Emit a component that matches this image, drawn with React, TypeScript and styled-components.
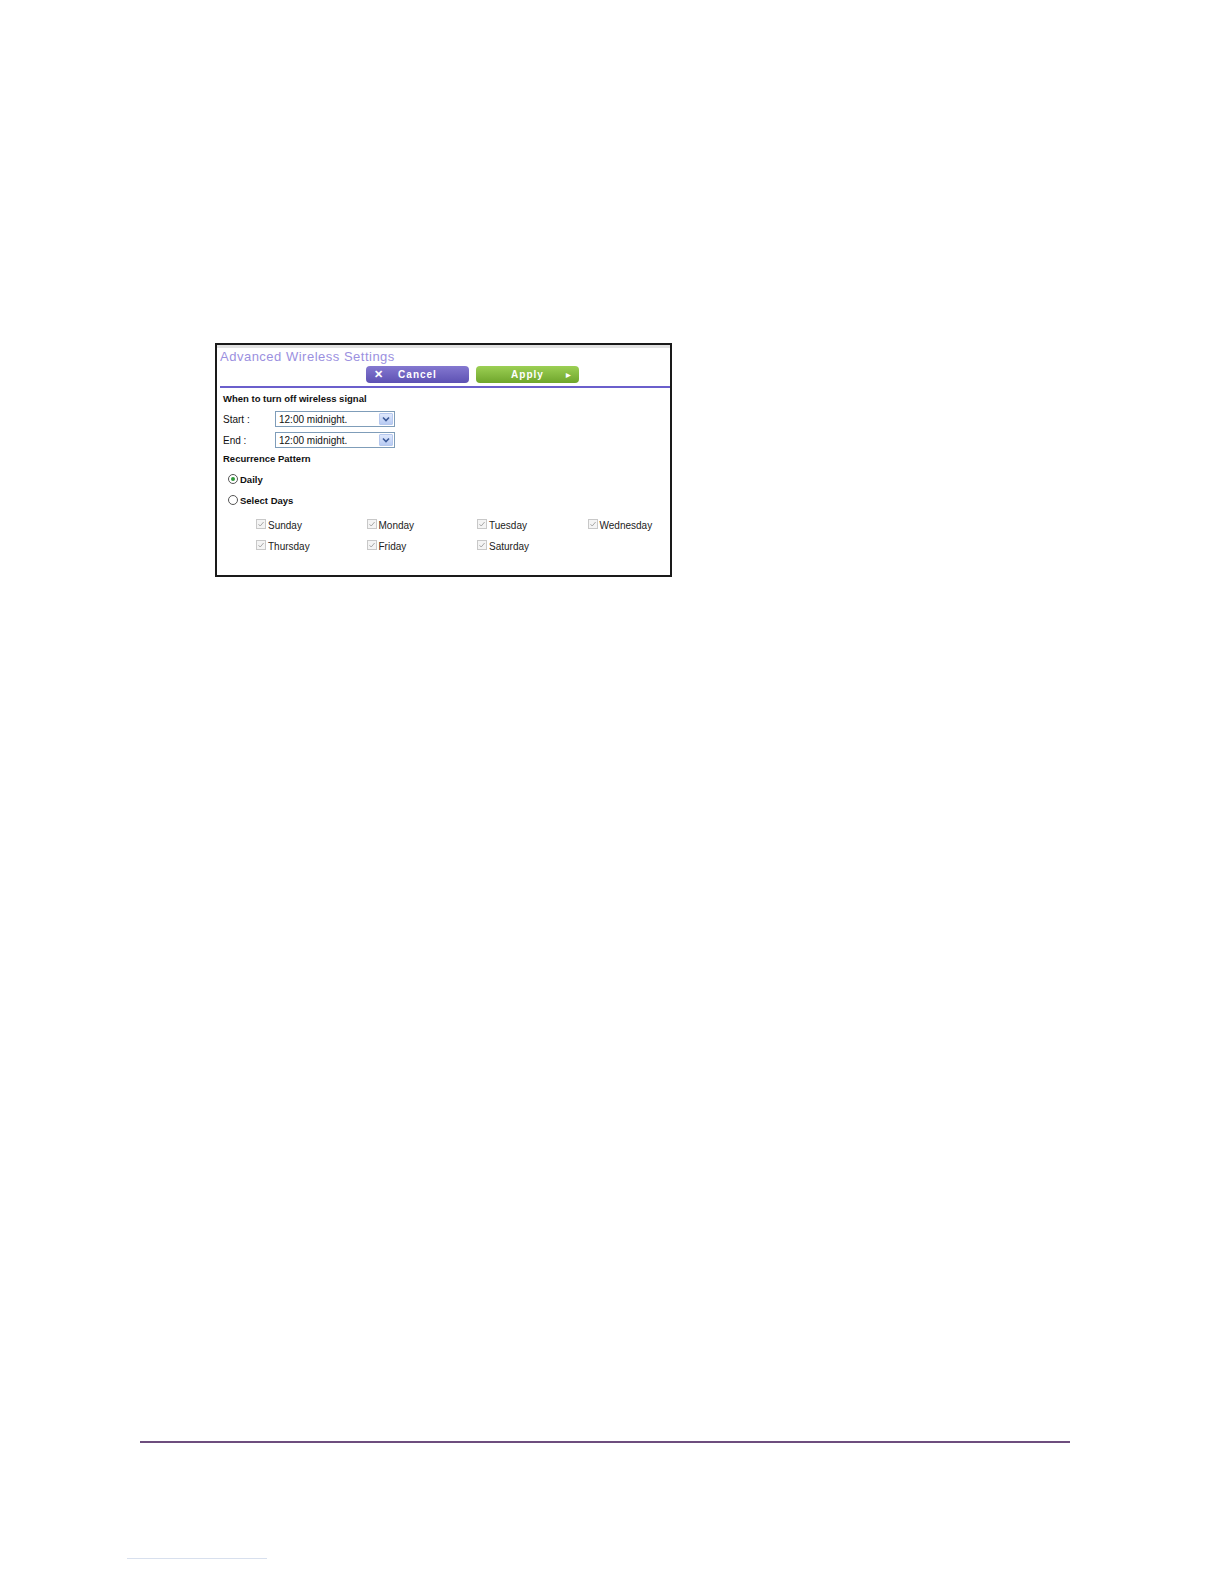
import styled, { createGlobalStyle } from "styled-components";

const GlobalStyle = createGlobalStyle`
  html, body {
    margin: 0;
    padding: 0;
    background: #fff;
  }
  body {
    font-family: "Liberation Sans", Arial, sans-serif;
  }
`;

const Page = styled.div`
  width: 1224px;
  height: 1584px;
  position: relative;
  overflow: hidden;
  background: #fff;
  padding-top: 343px;
  box-sizing: border-box;
`;

const Panel = styled.div`
  margin-left: 215px;
  width: 457px;
  height: 234px;
  box-sizing: border-box;
  border: 2px solid #1a1a1a;
  background: #fff;
  display: flex;
  flex-direction: column;
`;

const Header = styled.div`
  border-top: 3px solid #e2e2e2;
  padding: 2px 0 0 3px;
`;

const Title = styled.div`
  color: #9b90e0;
  font-size: 13px;
  line-height: 14px;
  letter-spacing: 0.5px;
`;

const ButtonRow = styled.div`
  display: flex;
  gap: 7px;
  padding-left: 146px;
  margin-top: 2px;
`;

const Button = styled.div<{ $variant: "cancel" | "apply" }>`
  width: 103px;
  height: 17px;
  border-radius: 4px;
  box-sizing: border-box;
  display: flex;
  align-items: center;
  color: #fff;
  font-weight: 700;
  font-size: 10px;
  letter-spacing: 1px;
  padding: 0 8px;
  background: ${(p) =>
    p.$variant === "cancel"
      ? "linear-gradient(#8478d0, #5d51b3)"
      : "linear-gradient(#9cd054, #6fa52c)"};
`;

const ButtonIcon = styled.span`
  font-size: 11px;
  width: 18px;
`;

const ButtonLabel = styled.span`
  flex: 1;
  text-align: center;
`;

const Spacer = styled.span`
  width: 18px;
`;

const ArrowIcon = styled.span`
  font-size: 6px;
  letter-spacing: 0;
  width: 18px;
  text-align: right;
`;

const Divider = styled.div`
  height: 2px;
  background: #6b5fcc;
  margin-top: 3px;
`;

const Body = styled.div`
  padding: 4px 0 0 6px;
  display: flex;
  flex-direction: column;
  color: #111;
  font-size: 10px;
`;

const SectionLabel = styled.div<{ $gap?: number }>`
  font-weight: 700;
  font-size: 9.5px;
  line-height: 14px;
  margin-top: ${(p) => p.$gap ?? 0}px;
`;

const FieldRow = styled.div`
  display: flex;
  align-items: center;
  height: 16px;
  margin-top: 5px;
`;

const FieldLabel = styled.div`
  width: 52px;
  font-size: 10px;
`;

const Select = styled.div`
  width: 120px;
  height: 16px;
  box-sizing: border-box;
  border: 1px solid #7f9db9;
  display: flex;
  align-items: center;
  justify-content: space-between;
  padding-left: 3px;
  font-size: 10px;
  background: #fff;
`;

const SelectArrow = styled.div`
  width: 14px;
  height: 12px;
  margin-right: 1px;
  border-radius: 1px;
  background: linear-gradient(#dfe8fc, #b8cbf3);
  border: 1px solid #b6c8ee;
  box-sizing: border-box;
  display: flex;
  align-items: center;
  justify-content: center;
`;

const RadioRow = styled.label<{ $gap: number }>`
  display: flex;
  align-items: center;
  height: 14px;
  margin-left: 5px;
  margin-top: ${(p) => p.$gap}px;
  font-weight: 700;
  font-size: 9.5px;
  gap: 2px;
`;

const Radio = styled.span<{ $checked?: boolean }>`
  width: 10px;
  height: 10px;
  border-radius: 50%;
  border: 1px solid #555;
  box-sizing: border-box;
  display: flex;
  align-items: center;
  justify-content: center;
  background: #fff;
  &::after {
    content: "";
    width: 4px;
    height: 4px;
    border-radius: 50%;
    background: ${(p) => (p.$checked ? "#2f9a3a" : "transparent")};
  }
`;

const DaysGrid = styled.div`
  display: grid;
  grid-template-columns: repeat(4, 110.5px);
  row-gap: 8px;
  padding-left: 33px;
  margin-top: 12px;
`;

const Day = styled.div`
  display: flex;
  align-items: center;
  height: 13px;
  gap: 2px;
  font-size: 10px;
  color: #222;
`;

const Check = styled.span`
  width: 10px;
  height: 10px;
  border: 1px solid #c8c8c8;
  box-sizing: border-box;
  background: #f4f4f4;
  display: flex;
  align-items: center;
  justify-content: center;
  margin-top: -3px;
`;

const Footer = styled.div`
  position: absolute;
  left: 140px;
  top: 1441px;
  width: 930px;
  height: 2px;
  background: #6d4d7e;
`;

const FootNote = styled.div`
  position: absolute;
  left: 127px;
  top: 1558px;
  width: 140px;
  height: 1px;
  background: #d8e0ee;
`;

const days = ["Sunday", "Monday", "Tuesday", "Wednesday", "Thursday", "Friday", "Saturday"];

function Chevron() {
  return (
    <svg width="8" height="6" viewBox="0 0 8 6">
      <path d="M1 1.5 L4 4.5 L7 1.5" fill="none" stroke="#3b5998" strokeWidth="1.6" />
    </svg>
  );
}

function Tick() {
  return (
    <svg width="8" height="8" viewBox="0 0 8 8">
      <path d="M1.5 4.2 L3.2 6 L6.6 2" fill="none" stroke="#a9a9a9" strokeWidth="1" />
    </svg>
  );
}

export default function App() {
  return (
    <>
      <GlobalStyle />
      <Page>
        <Panel>
          <Header>
            <Title>Advanced Wireless Settings</Title>
            <ButtonRow>
              <Button $variant="cancel">
                <ButtonIcon>✕</ButtonIcon>
                <ButtonLabel>Cancel</ButtonLabel>
                <Spacer />
              </Button>
              <Button $variant="apply">
                <Spacer />
                <ButtonLabel>Apply</ButtonLabel>
                <ArrowIcon>▶</ArrowIcon>
              </Button>
            </ButtonRow>
            <Divider />
          </Header>
          <Body>
            <SectionLabel>When to turn off wireless signal</SectionLabel>
            <FieldRow>
              <FieldLabel>Start :</FieldLabel>
              <Select>
                12:00 midnight.
                <SelectArrow>
                  <Chevron />
                </SelectArrow>
              </Select>
            </FieldRow>
            <FieldRow>
              <FieldLabel>End :</FieldLabel>
              <Select>
                12:00 midnight.
                <SelectArrow>
                  <Chevron />
                </SelectArrow>
              </Select>
            </FieldRow>
            <SectionLabel $gap={4}>Recurrence Pattern</SectionLabel>
            <RadioRow $gap={6}>
              <Radio $checked />
              Daily
            </RadioRow>
            <RadioRow $gap={7}>
              <Radio />
              Select Days
            </RadioRow>
            <DaysGrid>
              {days.map((d) => (
                <Day key={d}>
                  <Check>
                    <Tick />
                  </Check>
                  {d}
                </Day>
              ))}
            </DaysGrid>
          </Body>
        </Panel>
        <Footer />
        <FootNote />
      </Page>
    </>
  );
}
